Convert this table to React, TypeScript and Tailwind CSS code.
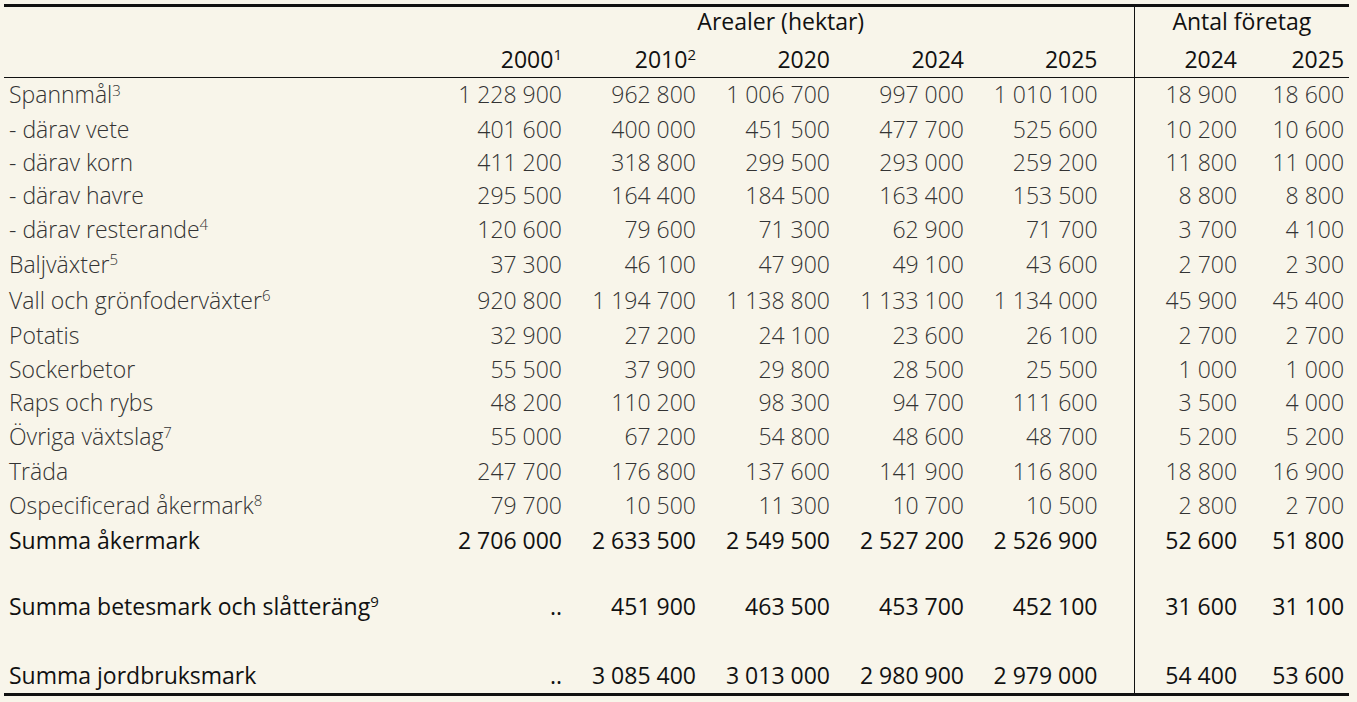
import React from 'react';

type Row = {
  label: string;
  sup?: string;
  vals: string[];
  sum?: boolean;
  h: string;
};

const rows: Row[] = [
  { label: 'Spannmål', sup: '3', vals: ['1 228 900', '962 800', '1 006 700', '997 000', '1 010 100', '18 900', '18 600'], h: 'h-[35px]' },
  { label: '- därav vete', vals: ['401 600', '400 000', '451 500', '477 700', '525 600', '10 200', '10 600'], h: 'h-[34px]' },
  { label: '- därav korn', vals: ['411 200', '318 800', '299 500', '293 000', '259 200', '11 800', '11 000'], h: 'h-[33px]' },
  { label: '- därav havre', vals: ['295 500', '164 400', '184 500', '163 400', '153 500', '8 800', '8 800'], h: 'h-[33px]' },
  { label: '- därav resterande', sup: '4', vals: ['120 600', '79 600', '71 300', '62 900', '71 700', '3 700', '4 100'], h: 'h-[34px]' },
  { label: 'Baljväxter', sup: '5', vals: ['37 300', '46 100', '47 900', '49 100', '43 600', '2 700', '2 300'], h: 'h-[36px]' },
  { label: 'Vall och grönfoderväxter', sup: '6', vals: ['920 800', '1 194 700', '1 138 800', '1 133 100', '1 134 000', '45 900', '45 400'], h: 'h-[36px]' },
  { label: 'Potatis', vals: ['32 900', '27 200', '24 100', '23 600', '26 100', '2 700', '2 700'], h: 'h-[35px]' },
  { label: 'Sockerbetor', vals: ['55 500', '37 900', '29 800', '28 500', '25 500', '1 000', '1 000'], h: 'h-[33px]' },
  { label: 'Raps och rybs', vals: ['48 200', '110 200', '98 300', '94 700', '111 600', '3 500', '4 000'], h: 'h-[33px]' },
  { label: 'Övriga växtslag', sup: '7', vals: ['55 000', '67 200', '54 800', '48 600', '48 700', '5 200', '5 200'], h: 'h-[35px]' },
  { label: 'Träda', vals: ['247 700', '176 800', '137 600', '141 900', '116 800', '18 800', '16 900'], h: 'h-[34px]' },
  { label: 'Ospecificerad åkermark', sup: '8', vals: ['79 700', '10 500', '11 300', '10 700', '10 500', '2 800', '2 700'], h: 'h-[34px]' },
  { label: 'Summa åkermark', sum: true, vals: ['2 706 000', '2 633 500', '2 549 500', '2 527 200', '2 526 900', '52 600', '51 800'], h: 'h-[36px]' },
  { label: 'Summa betesmark och slåtteräng', sup: '9', sum: true, vals: ['..', '451 900', '463 500', '453 700', '452 100', '31 600', '31 100'], h: 'h-[96px]' },
  { label: 'Summa jordbruksmark', sum: true, vals: ['..', '3 085 400', '3 013 000', '2 980 900', '2 979 000', '54 400', '53 600'], h: 'h-[40px]' },
];

const nb = (s: string) => s.replace(/ /g, '\u00a0');

// right padding per value column, so the right edges line up with the print
const pad = ['pr-0', 'pr-0', 'pr-0', 'pr-0', 'pr-[36px]', 'pr-0', 'pr-[5px]'];

export default function App() {
  return (
    <div className="min-h-screen bg-[#f8f5ea] pt-[4px] pl-[4px]" style={{ fontFamily: '"Open Sans", "Liberation Sans", sans-serif' }}>
      <table className="w-[1345px] table-fixed border-collapse border-t-[3px] border-b-[3px] border-[#111] text-[23px] leading-[33px]">
        <colgroup>
          <col className="w-[424px]" />
          <col className="w-[134px]" />
          <col className="w-[134px]" />
          <col className="w-[134px]" />
          <col className="w-[134px]" />
          <col className="w-[170px]" />
          <col className="w-[103px]" />
          <col className="w-[112px]" />
        </colgroup>
        <thead className="text-[#111]">
          <tr className="h-[29px] leading-[29px]">
            <th />
            <th colSpan={5} className="text-center font-normal align-middle">Arealer (hektar)</th>
            <th colSpan={2} className="border-l border-[#111] text-center font-normal align-middle">Antal företag</th>
          </tr>
          <tr className="h-[41px] border-b border-[#111]">
            <th />
            <th className="text-right font-normal align-bottom pb-[1px]">2000<sup className="text-[15px]">1</sup></th>
            <th className="text-right font-normal align-bottom pb-[1px]">2010<sup className="text-[15px]">2</sup></th>
            <th className="text-right font-normal align-bottom pb-[1px]">2020</th>
            <th className="text-right font-normal align-bottom pb-[1px]">2024</th>
            <th className="text-right font-normal align-bottom pb-[1px] pr-[36px]">2025</th>
            <th className="border-l border-[#111] text-right font-normal align-bottom pb-[1px]">2024</th>
            <th className="text-right font-normal align-bottom pb-[1px] pr-[5px]">2025</th>
          </tr>
        </thead>
        <tbody>
          {rows.map((r) => (
            <tr key={r.label} className={r.h}>
              <td className={`pl-[5px] whitespace-nowrap ${r.sum ? 'text-[#111] font-normal' : 'text-[#333] font-light'} ${r.label === 'Summa jordbruksmark' ? 'align-bottom pb-[1px]' : 'align-middle'}`}>
                {r.label}
                {r.sup && <sup className="text-[15px]">{r.sup}</sup>}
              </td>
              {r.vals.map((v, i) => (
                <td
                  key={i}
                  className={`text-right whitespace-nowrap ${pad[i]} ${i === 5 ? 'border-l border-[#111]' : ''} ${r.sum ? 'text-[#111] font-normal' : 'text-[#333] font-light'} ${r.label === 'Summa jordbruksmark' ? 'align-bottom pb-[1px]' : 'align-middle'}`}
                >
                  {nb(v)}
                </td>
              ))}
            </tr>
          ))}
        </tbody>
      </table>
    </div>
  );
}
